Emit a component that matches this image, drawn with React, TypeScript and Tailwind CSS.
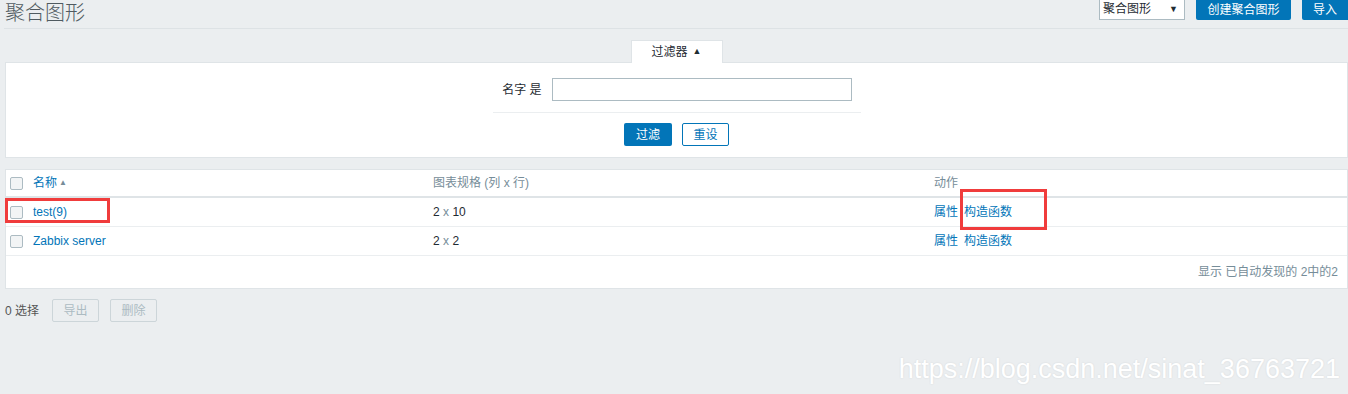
const font = { fontFamily: '"Liberation Sans", Arial, "Noto Sans CJK SC", sans-serif' };

interface Screen {
    id: string;
    name: string;
    columns: number;
    rows: number;
}

const screens: Screen[] = [
    { id: '1', name: 'test(9)', columns: 2, rows: 10 },
    { id: '2', name: 'Zabbix server', columns: 2, rows: 2 },
];

function Checkbox() {
    return <span className="block w-[13px] h-[13px] rounded-[2px] border border-[#acbbc2] bg-[#f2f4f5]" />;
}

export default function App() {
    return (
        <div className="relative min-h-[394px] bg-[#ebeef0] text-[12px] text-[#1f2c33] overflow-hidden" style={font}>
            {/* header */}
            <div className="ml-[4px] h-[29px] flex justify-between items-start border-b border-[#dde2e5]">
                <h1 className="pl-[1px] text-[20px] leading-[24px] text-[#4f5a60] font-light" style={{ fontFamily: '"Noto Sans CJK SC", serif' }}>
                    聚合图形
                </h1>
                <div className="-mt-[4px] flex items-start gap-[11px]">
                    <div className="w-[86px] h-[24px] bg-white border border-[#acbbc2] flex items-center justify-between pl-[3px] pr-[6px] pt-[2px]">
                        <span>聚合图形</span>
                        <span className="text-[9px] leading-none">▼</span>
                    </div>
                    <div className="w-[95px] h-[24px] bg-[#0275b8] text-white rounded-[2px] flex items-center justify-center pt-[4px]">创建聚合图形</div>
                    <div className="w-[46px] h-[24px] bg-[#0275b8] text-white rounded-l-[2px] flex items-center justify-center pt-[4px]">导入</div>
                </div>
            </div>

            {/* filter */}
            <div className="ml-[5px] mt-[11px]">
                <div className="flex justify-center">
                    <div className="w-[92px] h-[23px] bg-white border border-b-0 border-[#dfe4e7] flex items-center justify-center gap-[5px] -mb-[1px] relative">
                        <span>过滤器</span>
                        <span className="text-[9px]">▲</span>
                    </div>
                </div>
                <div className="bg-white border border-[#dfe4e7] h-[96px] flex flex-col items-center pt-[15px]">
                    <div className="w-[368px]">
                        <div className="flex items-center h-[23px]">
                            <div className="w-[59px] pr-[10px] text-right">名字 是</div>
                            <div className="w-[300px] h-[23px] border border-[#acbbc2] bg-white" />
                        </div>
                        <div className="mt-[11px] border-t border-[#ebeef0]" />
                        <div className="mt-[10px] flex justify-center gap-[10px]">
                            <div className="w-[48px] h-[23px] bg-[#0275b8] text-white rounded-[2px] flex items-center justify-center">过滤</div>
                            <div className="w-[47px] h-[23px] border border-[#0275b8] text-[#0275b8] rounded-[2px] flex items-center justify-center">重设</div>
                        </div>
                    </div>
                </div>
            </div>

            {/* table */}
            <div className="ml-[5px] mt-[11px] bg-white border border-[#dfe4e7]">
                <div className="flex items-center h-[28px] border-b-2 border-[#dfe4e7] text-[#768d99]">
                    <div className="w-[23px] pl-[4px]"><Checkbox /></div>
                    <div className="w-[399px] pl-[4px] text-[#0275b8] flex items-center gap-[2px]">
                        名称 <span className="text-[8px] text-[#768d99]">▲</span>
                    </div>
                    <div className="w-[501px] pl-[5px]">图表规格 (列 x 行)</div>
                    <div className="pl-[5px]">动作</div>
                </div>
                {screens.map((s) => (
                    <div key={s.id} className="flex items-center h-[29px] border-b border-[#ebeef0]">
                        <div className="w-[23px] pl-[4px]"><Checkbox /></div>
                        <div className="w-[399px] pl-[4px] text-[#0275b8]">{s.name}</div>
                        <div className="w-[501px] pl-[5px]">
                            {s.columns} <span className="text-[#768d99]">x</span> {s.rows}
                        </div>
                        <div className="pl-[5px] flex gap-[6px] text-[#0275b8]">
                            <span>属性</span>
                            <span>构造函数</span>
                        </div>
                    </div>
                ))}
                <div className="h-[32px] flex items-center justify-end pr-[9px] text-[#768d99]">显示 已自动发现的 2中的2</div>
            </div>

            {/* actions */}
            <div className="ml-[5px] mt-[10px] flex items-center h-[23px]">
                <span className="mr-[13px] text-[#555]">0 选择</span>
                <div className="w-[47px] h-[23px] border border-[#ccd5d9] rounded-[2px] text-[#acbbc2] flex items-center justify-center">导出</div>
                <div className="ml-[11px] w-[47px] h-[23px] border border-[#ccd5d9] rounded-[2px] text-[#acbbc2] flex items-center justify-center">删除</div>
            </div>

            {/* watermark */}
            <div className="mt-[30px] pr-[8px] text-right text-[27px] leading-[34px] text-white" style={{ textShadow: '0 0 2px rgba(0,0,0,0.1)' }}>
                https://blog.csdn.net/sinat_36763721
            </div>

            {/* annotation boxes */}
            <div className="absolute left-[5px] top-[198px] w-[105px] h-[25px] border-[3px] border-[#f03c3c]" />
            <div className="absolute left-[960px] top-[189px] w-[87px] h-[41px] border-[3px] border-[#f03c3c]" />
        </div>
    );
}
